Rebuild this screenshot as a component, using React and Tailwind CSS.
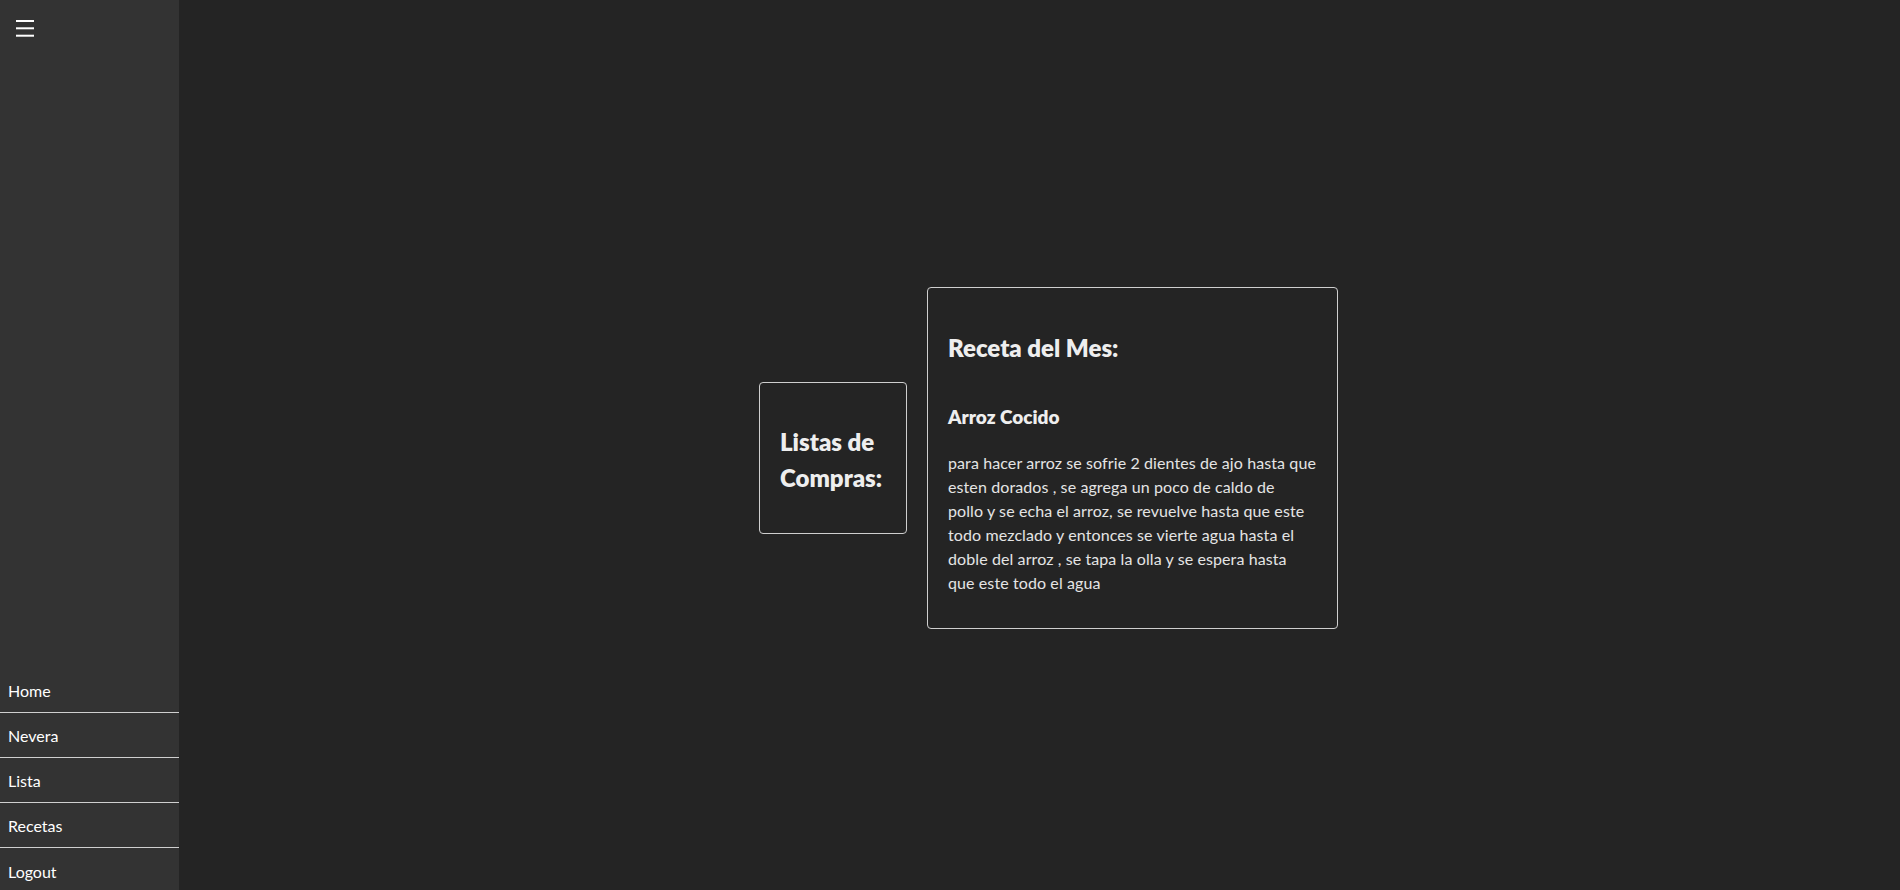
export default function App() {
  const links = ["Home", "Nevera", "Lista", "Recetas", "Logout"];
  const lines = [
    "para hacer arroz se sofrie 2 dientes de ajo hasta que",
    "esten dorados , se agrega un poco de caldo de",
    "pollo y se echa el arroz, se revuelve hasta que este",
    "todo mezclado y entonces se vierte agua hasta el",
    "doble del arroz , se tapa la olla y se espera hasta",
    "que este todo el agua",
  ];

  return (
    <div
      className="flex h-screen w-full overflow-hidden bg-[#242424] text-[#e4e4e4]"
      style={{ fontFamily: "Lato, 'Open Sans', sans-serif" }}
    >
      <aside className="flex h-full w-[179px] shrink-0 flex-col justify-between overflow-hidden bg-[#333333]">
        <div className="pl-4 pt-5">
          <svg width="18" height="17" viewBox="0 0 18 17" className="block">
            <rect x="0" y="0" width="18" height="2" fill="#ffffff" />
            <rect x="0" y="7.3" width="18" height="2" fill="#ffffff" />
            <rect x="0" y="14.7" width="18" height="2" fill="#ffffff" />
          </svg>
        </div>
        <nav className="-mb-[3px] flex flex-col">
          {links.map((l, i) => (
            <a
              key={l}
              href="#"
              className={
                "flex h-[45px] items-center pl-2 pt-[2px] text-[16px] text-white " +
                (i < links.length - 1 ? "border-b border-[#d0d0d0]" : "")
              }
            >
              {l}
            </a>
          ))}
        </nav>
      </aside>

      <main className="flex flex-1 items-center justify-center gap-5 pl-[18px] pt-[26px]">
        <div className="w-[148px] rounded-[4px] border border-[#cfcfcf] px-5 pb-[17px] pt-[21px]">
          <h2 className="my-[20px] text-[24px] font-extrabold leading-[36px] text-[#eeeeee]">
            Listas de Compras:
          </h2>
        </div>

        <div className="w-[411px] rounded-[4px] border border-[#cfcfcf] px-5 pb-[17px] pt-[22px]">
          <h2 className="mb-[37px] mt-[20px] text-[24px] font-extrabold leading-[36px] text-[#eeeeee]">
            Receta del Mes:
          </h2>
          <h3 className="mb-[20px] text-[19px] font-extrabold leading-[28px] text-[#eeeeee]">
            Arroz Cocido
          </h3>
          <p className="mb-[16px] text-[16px] leading-[24px] tracking-[0.1px] text-[#e4e4e4]">
            {lines.map((t, i) => (
              <span key={i} className="block whitespace-nowrap">
                {t}
              </span>
            ))}
          </p>
        </div>
      </main>
    </div>
  );
}
